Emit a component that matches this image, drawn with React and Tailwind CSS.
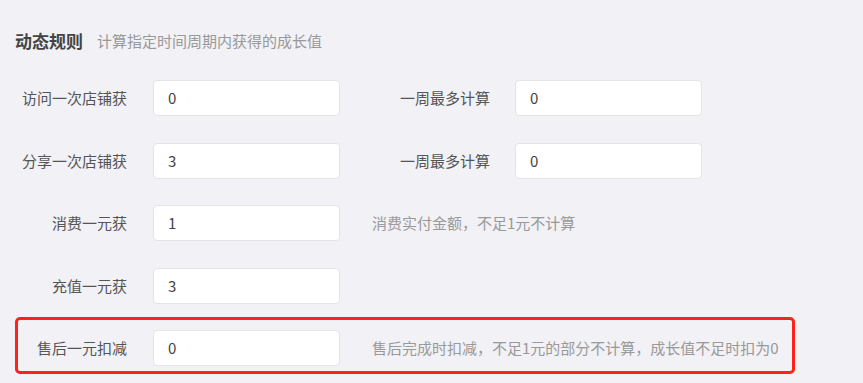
const rows = [
  { label: '访问一次店铺获', value: '0', extra: { label: '一周最多计算', value: '0' } },
  { label: '分享一次店铺获', value: '3', extra: { label: '一周最多计算', value: '0' } },
  { label: '消费一元获', value: '1', hint: '消费实付金额，不足1元不计算' },
  { label: '充值一元获', value: '3' },
];

function Field({ value }) {
  return (
    <div className="w-[187px] h-[36px] flex items-center pl-[14px] bg-white border border-[#e3e3e8] rounded-[4px] text-[15px] text-[#444]">
      {value}
    </div>
  );
}

function Row({ label, value, extra, hint, labelWidth = 'w-[112px]' }) {
  return (
    <div className="flex items-center h-[36px]">
      <div className={`${labelWidth} text-right text-[15px] text-[#555] shrink-0`}>{label}</div>
      <div className="ml-[26px]">
        <Field value={value} />
      </div>
      {extra && (
        <>
          <div className="ml-[26px] w-[124px] text-right text-[15px] text-[#555]">{extra.label}</div>
          <div className="ml-[25px]">
            <Field value={extra.value} />
          </div>
        </>
      )}
      {hint && <div className="ml-[32px] text-[15px] text-[#999]">{hint}</div>}
    </div>
  );
}

export default function App() {
  return (
    <div
      className="w-[863px] h-[383px] overflow-hidden bg-[#f1f1f6] pt-[29px] pl-[15px]"
      style={{ fontFamily: '"Noto Sans CJK SC", "Noto Sans", sans-serif' }}
    >
      <div className="flex items-center h-[22px]">
        <h2 className="text-[17px] font-bold text-[#444] leading-none">动态规则</h2>
        <span className="ml-[14px] text-[15px] text-[#999] leading-none">计算指定时间周期内获得的成长值</span>
      </div>

      <div className="mt-[29px] flex flex-col">
        <Row {...rows[0]} />
        <div className="mt-[27px]">
          <Row {...rows[1]} />
        </div>
        <div className="mt-[26px]">
          <Row {...rows[2]} />
        </div>
        <div className="mt-[27px]">
          <Row {...rows[3]} />
        </div>

        {/* highlighted row */}
        <div className="mt-[13px] w-[780px] border-[3px] border-[#ff2219] rounded-[5px] pt-[10px] pb-[5px]">
          <Row
            label="售后一元扣减"
            value="0"
            hint="售后完成时扣减，不足1元的部分不计算，成长值不足时扣为0"
            labelWidth="w-[109px]"
          />
        </div>
      </div>
    </div>
  );
}
